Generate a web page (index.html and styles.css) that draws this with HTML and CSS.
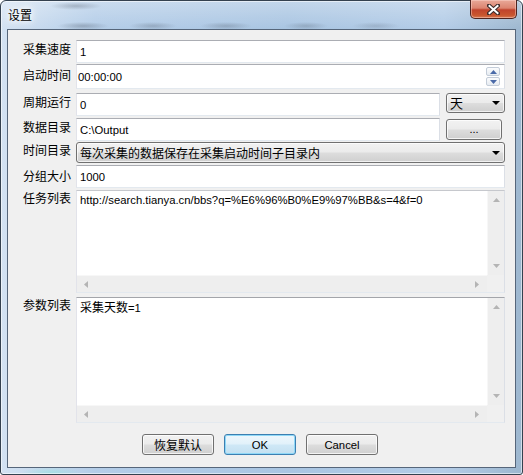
FILE: index.html
```html
<!DOCTYPE html>
<html lang="zh-CN">
<head>
<meta charset="utf-8">
<title>设置</title>
<link rel="stylesheet" href="styles.css">
</head>
<body>
<div class="window">
  <div class="titlebar">
    <span class="title">设置</span>
    <div class="close">
      <svg width="13" height="11" viewBox="0 0 13 11">
        <path d="M2 1.5 L11 9.5 M11 1.5 L2 9.5" stroke="#3a2a2a" stroke-width="4" stroke-linecap="square"/>
        <path d="M2.5 2 L10.5 9 M10.5 2 L2.5 9" stroke="#ffffff" stroke-width="2" stroke-linecap="square"/>
      </svg>
    </div>
  </div>
  <div class="client">
    <div class="row r1">
      <div class="label">采集速度</div>
      <div class="field"><div class="input">1</div></div>
    </div>
    <div class="row r2">
      <div class="label lt3">启动时间</div>
      <div class="field">
        <div class="input time">
          <span>00:00:00</span>
          <div class="spin">
            <div class="spin-btn"><svg width="7" height="4" viewBox="0 0 7 4"><path d="M0 4 L3.5 0 L7 4 Z" fill="#4a6aa8"/></svg></div>
            <div class="spin-btn"><svg width="7" height="4" viewBox="0 0 7 4"><path d="M0 0 L7 0 L3.5 4 Z" fill="#4a6aa8"/></svg></div>
          </div>
        </div>
      </div>
    </div>
    <div class="row r3">
      <div class="label">周期运行</div>
      <div class="field split">
        <div class="input grow">0</div>
        <div class="combo small">
          <span class="combo-text big">天</span>
          <svg class="drop" width="8" height="4" viewBox="0 0 8 4"><path d="M0 0 L8 0 L4 4 Z" fill="#000"/></svg>
        </div>
      </div>
    </div>
    <div class="row r4">
      <div class="label">数据目录</div>
      <div class="field split">
        <div class="input grow">C:\Output</div>
        <div class="button dots">...</div>
      </div>
    </div>
    <div class="row r5">
      <div class="label lt0">时间目录</div>
      <div class="field">
        <div class="combo full">
          <span class="combo-text">每次采集的数据保存在采集启动时间子目录内</span>
          <svg class="drop" width="8" height="4" viewBox="0 0 8 4"><path d="M0 0 L8 0 L4 4 Z" fill="#000"/></svg>
        </div>
      </div>
    </div>
    <div class="row r6">
      <div class="label lt3">分组大小</div>
      <div class="field"><div class="input">1000</div></div>
    </div>
    <div class="row r7">
      <div class="label lt0">任务列表</div>
      <div class="field">
        <div class="textbox">
          <div class="tb-text latin">http://search.tianya.cn/bbs?q=%E6%96%B0%E9%97%BB&amp;s=4&amp;f=0</div>
          <div class="vscroll">
            <svg width="7" height="4" viewBox="0 0 7 4"><path d="M0 4 L3.5 0 L7 4 Z" fill="#b4b4b4"/></svg>
            <svg width="7" height="4" viewBox="0 0 7 4"><path d="M0 0 L7 0 L3.5 4 Z" fill="#b4b4b4"/></svg>
          </div>
          <div class="hscroll">
            <svg width="4" height="7" viewBox="0 0 4 7"><path d="M4 0 L4 7 L0 3.5 Z" fill="#b4b4b4"/></svg>
            <svg width="4" height="7" viewBox="0 0 4 7"><path d="M0 0 L0 7 L4 3.5 Z" fill="#b4b4b4"/></svg>
          </div>
          <div class="corner"></div>
        </div>
      </div>
    </div>
    <div class="row r8">
      <div class="label lt0">参数列表</div>
      <div class="field">
        <div class="textbox dark-top">
          <div class="tb-text">采集天数<span class="latin">=1</span></div>
          <div class="vscroll">
            <svg width="7" height="4" viewBox="0 0 7 4"><path d="M0 4 L3.5 0 L7 4 Z" fill="#b4b4b4"/></svg>
            <svg width="7" height="4" viewBox="0 0 7 4"><path d="M0 0 L7 0 L3.5 4 Z" fill="#b4b4b4"/></svg>
          </div>
          <div class="hscroll">
            <svg width="4" height="7" viewBox="0 0 4 7"><path d="M4 0 L4 7 L0 3.5 Z" fill="#b4b4b4"/></svg>
            <svg width="4" height="7" viewBox="0 0 4 7"><path d="M0 0 L0 7 L4 3.5 Z" fill="#b4b4b4"/></svg>
          </div>
          <div class="corner"></div>
        </div>
      </div>
    </div>
    <div class="actions">
      <div class="button act">恢复默认</div>
      <div class="button act default latin">OK</div>
      <div class="button act latin">Cancel</div>
    </div>
  </div>
</div>
</body>
</html>
```

FILE: styles.css
```css
* { box-sizing: border-box; }
html, body { margin: 0; padding: 0; }
body {
  width: 523px;
  height: 475px;
  overflow: hidden;
  background: #ffffff;
  font-family: "Noto Sans CJK SC", "Liberation Sans", sans-serif;
  font-size: 12px;
  color: #000;
}

.latin { font-family: "Liberation Sans", "Noto Sans CJK SC", sans-serif; font-size: 11.3px; }

.window {
  width: 523px;
  height: 475px;
  border: 1px solid #34414f;
  border-radius: 6px 6px 3px 3px;
  display: flex;
  flex-direction: column;
  box-shadow: inset 0 0 0 1px rgba(255,255,255,0.55);
  background:
    radial-gradient(ellipse 26px 4px at 75px 5px, rgba(90,100,115,0.35), transparent),
    radial-gradient(ellipse 26px 4px at 82px 25px, rgba(80,90,105,0.35), transparent),
    radial-gradient(ellipse 24px 4px at 152px 25px, rgba(80,90,105,0.3), transparent),
    radial-gradient(ellipse 26px 4px at 225px 25px, rgba(80,90,105,0.3), transparent),
    radial-gradient(ellipse 22px 4px at 305px 25px, rgba(80,90,105,0.28), transparent),
    radial-gradient(ellipse 24px 4px at 375px 25px, rgba(80,90,105,0.22), transparent),
    radial-gradient(ellipse 30px 6px at 50px 472px, rgba(140,230,220,0.5), transparent),
    linear-gradient(to bottom, rgba(255,255,255,0.3), rgba(255,255,255,0) 28px),
    linear-gradient(to right, #d3e2f2 0%, #b4cde8 18%, #a9c5e2 55%, #b3cce7 85%, #9db7cf 100%);
}

.titlebar {
  height: 28px;
  flex: none;
  display: flex;
  justify-content: space-between;
  align-items: flex-start;
}
.title {
  margin: 6px 0 0 7px;
  line-height: 16px;
  font-size: 12px;
  color: #000;
  text-shadow: 0 0 5px #fff, 0 0 9px #fff, 0 0 12px #fff;
}
.close {
  width: 47px;
  height: 19px;
  margin: -1px 5px 0 0;
  border: 1px solid #4e2420;
  border-top: none;
  border-radius: 0 0 5px 5px;
  background: linear-gradient(to bottom, #e9a999 0%, #dc8470 45%, #c0432c 55%, #c9562f 85%, #d87a55 100%);
  box-shadow: inset 0 0 0 1px rgba(255,220,210,0.45);
  display: flex;
  align-items: center;
  justify-content: center;
}

.client {
  margin: 0 6px;
  height: 439px;
  flex: none;
  border: 1px solid #56667a;
  background: #f0f0f0;
  display: flex;
  flex-direction: column;
  padding: 10px 10px 0 15px;
}

.row { display: flex; flex: none; }
.label {
  width: 53px;
  flex: none;
  line-height: 16px;
  padding-top: 1px;
  white-space: nowrap;
  font-size: 12px;
}
.label.lt3 { padding-top: 3px; }
.label.lt0 { padding-top: 0; }

.field { flex: 1; min-width: 0; }
.split { display: flex; gap: 6px; align-items: flex-start; }

.r1 { height: 23px; }
.r2 { height: 25px; margin-top: 1px; }
.r3 { height: 23px; margin-top: 4px; }
.r4 { height: 23px; margin-top: 2px; }
.r5 { height: 21px; margin-top: 1px; }
.r6 { height: 23px; margin-top: 2px; }
.r7 { height: 103px; margin-top: 2px; }
.r8 { height: 126px; margin-top: 4px; }

.input {
  height: 100%;
  border: 1px solid;
  border-color: #abadb3 #dbdfe6 #e3e9ef #e2e3ea;
  background: #fff;
  padding: 0 3px;
  display: flex;
  align-items: center;
  font-family: "Liberation Sans", sans-serif;
  font-size: 11.3px;
  white-space: nowrap;
}
.grow { flex: 1; height: 23px; }
.input.time { padding: 0 4px 0 1px; }
.spin {
  margin-left: auto;
  display: flex;
  flex-direction: column;
  gap: 1px;
}
.spin-btn {
  width: 14px;
  height: 9px;
  border: 1px solid #c3ccd8;
  border-radius: 2px;
  background: linear-gradient(to bottom, #fbfcfd, #e6ebf1);
  display: flex;
  align-items: center;
  justify-content: center;
}

.combo {
  border: 1px solid #707070;
  border-radius: 3px;
  background: linear-gradient(to bottom, #f2f2f2 0%, #ebebeb 48%, #dddddd 52%, #cfcfcf 100%);
  box-shadow: inset 0 0 0 1px rgba(255,255,255,0.7);
  display: flex;
  align-items: center;
  padding: 0 4px 0 3px;
}
.combo.small { width: 59px; height: 20px; flex: none; }
.combo.full { height: 21px; }
.combo-text { line-height: 16px; white-space: nowrap; }
.combo-text.big { font-size: 13px; }
.drop { margin-left: auto; }

.button {
  border: 1px solid #707070;
  border-radius: 3px;
  background: linear-gradient(to bottom, #f2f2f2 0%, #ebebeb 48%, #dddddd 52%, #cfcfcf 100%);
  box-shadow: inset 0 0 0 1px rgba(255,255,255,0.75);
  display: flex;
  align-items: center;
  justify-content: center;
  white-space: nowrap;
}
.button.dots {
  width: 56px;
  height: 21px;
  flex: none;
  margin-top: 1px;
  margin-right: 3px;
  font-family: "Liberation Sans", sans-serif;
  font-size: 11px;
  padding-bottom: 2px;
}

.textbox {
  height: 100%;
  border: 1px solid;
  border-color: #c6c8cd #dbdfe6 #e3e9ef #e2e3ea;
  background: #fff;
  display: grid;
  grid-template-columns: 1fr 17px;
  grid-template-rows: 1fr 17px;
}
.textbox.dark-top { border-top-color: #a3a5aa; }
.tb-text {
  padding: 1px 0 0 3px;
  line-height: 16px;
  white-space: nowrap;
  overflow: hidden;
}
.vscroll {
  background: #eeeeee;
  border-left: 1px solid #f7f7f7;
  display: flex;
  flex-direction: column;
  align-items: center;
  justify-content: space-between;
  padding: 7px 0 7px;
}
.hscroll {
  background: #eeeeee;
  border-top: 1px solid #f7f7f7;
  display: flex;
  align-items: center;
  justify-content: space-between;
  padding: 0 8px 0 7px;
}
.corner { background: #f0f0f0; }

.actions {
  display: flex;
  gap: 10px;
  margin-top: 11px;
  padding-left: 119px;
}
.button.act {
  width: 72px;
  height: 21px;
  line-height: 16px;
}
.button.default {
  border-color: #3c7fb1;
  background: linear-gradient(to bottom, #eef7fc 0%, #e1f1fa 48%, #cfe8f6 52%, #c3e0f1 100%);
  box-shadow: inset 0 0 0 1px #8fd8f7;
}
```
